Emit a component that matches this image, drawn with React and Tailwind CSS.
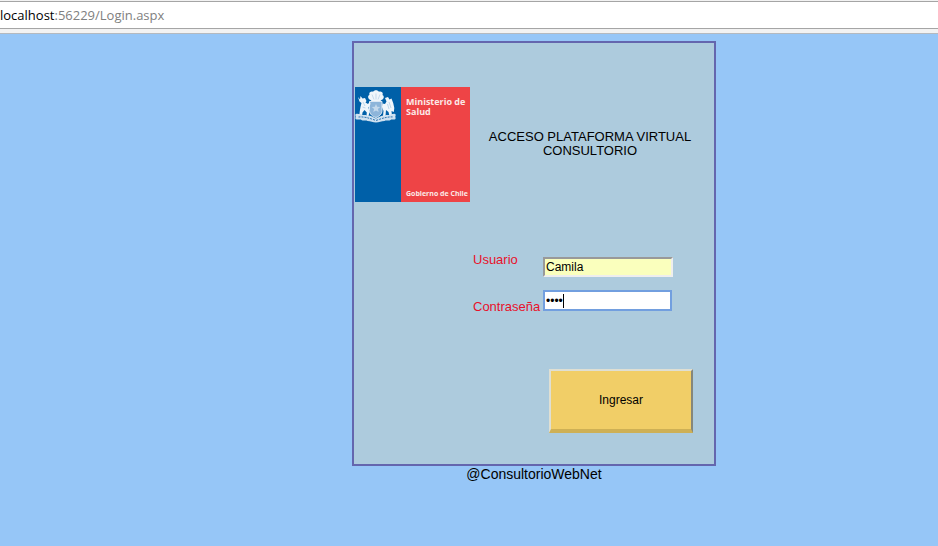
function CoatOfArms() {
  return (
    <svg viewBox="0 0 42 34" className="h-[34px] w-[42px]" aria-hidden="true">
      {/* plume */}
      <path d="M15.500 10C12.800 8.800 12.300 6 14.500 4.800C13.500 2.500 16 .8 18 1.800C19 -.3 23 -.3 24 1.800C26.500 1 28.500 2.800 27.500 5C29.500 6 29.200 8.800 26.500 10L25 11.500H17Z" fill="#f0f6fb" />
      <path d="M17 4.500l2 5M21 3.500v6M25 4.500l-2 5" stroke="#a9c8e2" strokeWidth=".6" fill="none" />
      {/* shield */}
      <path d="M14.500 11.500H27V20.500C27 24 24 26.500 21 27.500C17.500 26.500 14.500 24 14.500 20.500Z" fill="#8db5da" stroke="#dbe8f4" strokeWidth="1" />
      <path d="M21 14l1.200 2.800 3 .2-2.300 2 .8 3-2.700-1.600-2.700 1.600.8-3-2.300-2 3-.2Z" fill="#c4d9ec" />
      {/* huemul */}
      <path d="M3 7L5 9.500L5.500 6L7.500 8.500L10 8L11.500 11L10.500 12.500L13 14L15 11.500L15.500 14L13.500 17.500L14.500 22L13.500 26H11.500L11.800 22.500L9.500 20L7.500 22.500L7 26H4.300L4.800 21L5.500 17L6.500 13L4.500 11.500Z" fill="#f0f6fb" />
      <path d="M8 12l2 4M7.500 17l3 1" stroke="#a9c8e2" strokeWidth=".7" />
      {/* condor */}
      <path d="M30 8L33 7L34.500 9.500L36.500 8.500L38.200 13L39.300 18L38.800 22L36.500 21L37 26H34.500L33.500 22L31 20L30.500 26H28L28.500 21L27 17L27.500 13.500L30 14L31.500 11.500Z" fill="#f0f6fb" />
      <path d="M34 12l2 6M32.500 14l1.500 5" stroke="#a9c8e2" strokeWidth=".7" />
      {/* laurel and motto ribbon */}
      <path d="M0 25C1.500 22.500 4 24.500 6 24C7.500 26 10 24 12 25.500C15 25 18 27 21 28.500C24 27 27 25 30 25.500C32 24 34.500 26 36 24C37.500 24.500 39.500 22.500 41 25C39.500 26 41 27.500 40.500 29C38.500 30.500 37 28.500 35.500 30C33.500 31.500 31.500 29.500 29.500 31C26.500 31 24 32.500 21 32.500C18 32.500 15.500 31 12.500 31C10.500 29.500 8.500 31.500 6.500 30C5 28.500 3 30.500 .5 29C0 27.500 1.500 26 0 25Z" fill="#cfe1f0" />
      <path d="M3.500 27C9 26.500 14 28 21 30.500C28 28 33 26.500 38.500 27" fill="none" stroke="#2f76b3" strokeWidth="1" strokeDasharray="2 1" />
    </svg>
  );
}

function MinistryLogo() {
  return (
    <div className="flex size-[115px] shrink-0 overflow-hidden bg-[#ee4446] font-['Open_Sans',sans-serif] font-bold text-[#fbe9e6]">
      <div className="w-[46px] shrink-0 bg-[#0060a8] pt-[3px]">
        <CoatOfArms />
      </div>
      <div className="flex flex-col justify-between pt-[10px] pb-[3px] pl-[5px] whitespace-nowrap">
        <p className="text-[9px] leading-[10px]">
          Ministerio de
          <br />
          Salud
        </p>
        <p className="text-[7px] leading-[10px]">Gobierno de Chile</p>
      </div>
    </div>
  );
}

export default function App() {
  return (
    <div className="flex min-h-screen flex-col bg-[#96c6f7] font-['Liberation_Sans',Arial,sans-serif] text-black">
      <header className="border-b border-[#b4b9bf] bg-[#f2f2f2] pt-px pb-1">
        <div className="flex h-7 items-center border-y border-[#a5a5a5] bg-white pt-[2px] font-['Open_Sans',sans-serif] text-[13px] whitespace-nowrap">
          <span>localhost</span>
          <span className="text-[#808080]">:56229/Login.aspx</span>
        </div>
      </header>

      <main className="flex flex-col items-center pt-[7px] pl-[130px]">
        <form
          className="w-[364px] border-2 border-[#6466ae] bg-[#adcbdd] pt-11 pb-[31px]"
          onSubmit={(e) => e.preventDefault()}
        >
          <div className="flex items-center pr-1 pl-px">
            <MinistryLogo />
            <h1 className="flex-1 pb-[2px] text-center text-[13px] leading-[14px]">
              ACCESO PLATAFORMA VIRTUAL CONSULTORIO
            </h1>
          </div>

          <div className="mt-12 ml-[119px] grid grid-cols-[70px_130px] gap-y-3 text-[13px]">
            <label htmlFor="user" className="pt-[2px] leading-4 text-[#e8102a]">
              Usuario
            </label>
            <input
              id="user"
              type="text"
              defaultValue="Camila"
              className="mt-[7px] h-5 w-full rounded-none border-2 border-t-[#999] border-r-[#eee] border-b-[#eee] border-l-[#999] bg-[#faffbd] px-px text-xs outline-none"
            />
            <label htmlFor="password" className="pt-[10px] leading-4 text-[#e8102a]">
              Contraseña
            </label>
            <div className="relative mt-px">
              <input
                id="password"
                type="password"
                defaultValue="1234"
                className="block h-[21px] w-[129px] rounded-none border-2 border-[#729fdf] bg-white px-px text-xs caret-transparent outline-none"
              />
              <span className="absolute top-1 left-5 h-[14px] w-px bg-black" />
            </div>
          </div>

          <button
            type="submit"
            className="mt-[54px] ml-[195px] block h-16 w-36 border-2 border-b-4 border-t-[#dfdfd3] border-r-[#85877b] border-b-[#ceb055] border-l-[#dfdfd3] bg-[#f1ce67] text-xs"
          >
            Ingresar
          </button>
        </form>
        <footer className="text-sm leading-4">@ConsultorioWebNet</footer>
      </main>
    </div>
  );
}
